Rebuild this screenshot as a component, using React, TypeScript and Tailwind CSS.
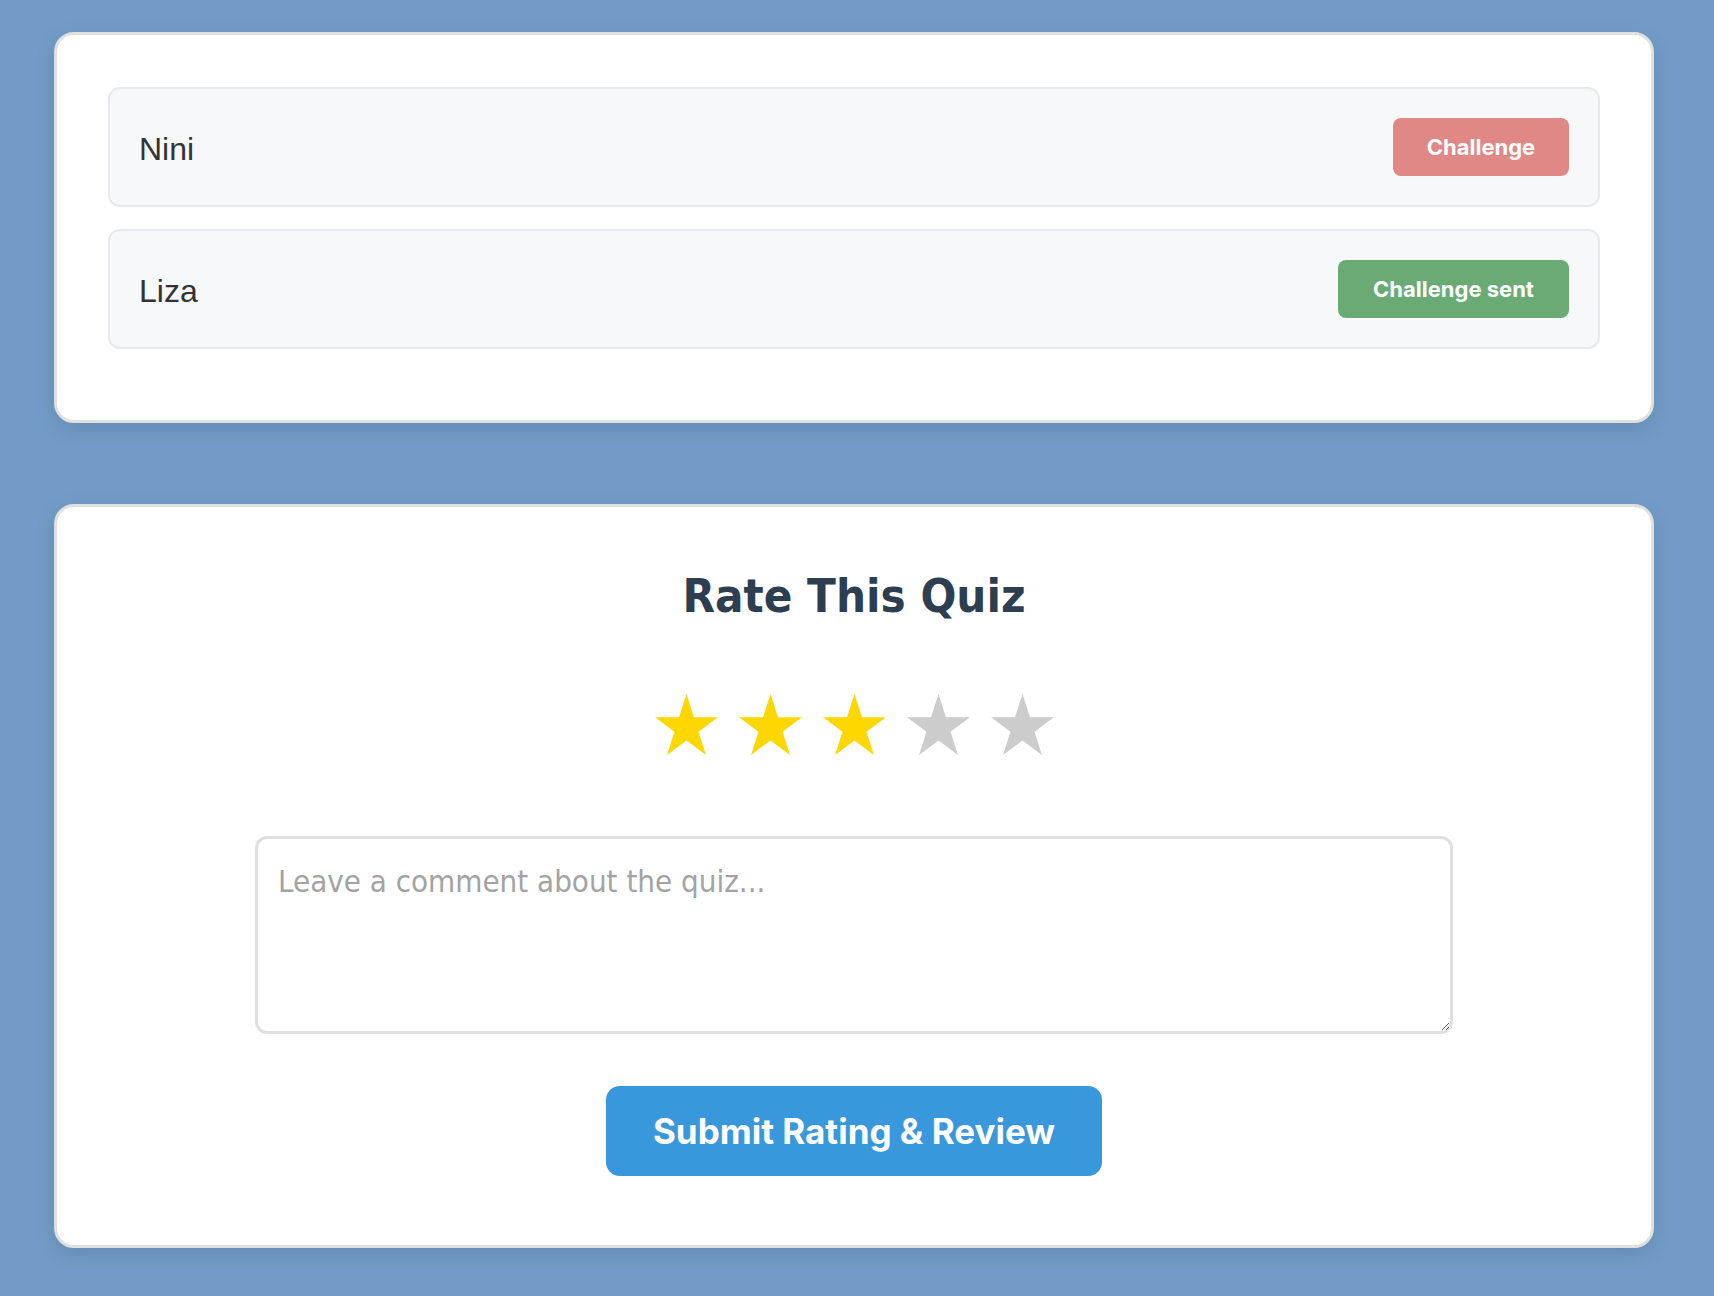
import { useState } from "react";

const players = [
  { name: "Nini", sent: false },
  { name: "Liza", sent: true },
];

function Star({ filled }: { filled: boolean }) {
  return (
    <svg width="63" height="61" viewBox="0 0 63 60" preserveAspectRatio="none">
      <polygon
        points="31.5,0 38.94,22.87 62.98,22.87 43.53,37.01 50.96,59.88 31.5,45.75 12.04,59.88 19.47,37.01 0.02,22.87 24.06,22.87"
        fill={filled ? "#ffd700" : "#cccccc"}
      />
    </svg>
  );
}

function ChallengeList() {
  return (
    <div className="w-[1600px] rounded-[20px] border-[3px] border-[#e0e0e0] bg-white px-[51px] pt-[52px] pb-[71px] shadow-[0_6px_20px_rgba(0,0,0,0.12)]">
      <div className="flex flex-col gap-[22px]">
        {players.map((p) => (
          <div
            key={p.name}
            className="flex h-[120px] items-center justify-between rounded-xl border-2 border-[#e8e9ed] bg-[#f7f8fa] px-[29px]"
          >
            <span className="mt-[3px] font-['Liberation_Sans',Arial,sans-serif] text-[32px] text-[#333]">
              {p.name}
            </span>
            {p.sent ? (
              <button className="flex h-[58px] w-[231px] items-center justify-center rounded-lg bg-[#6aab75] font-['Inter',sans-serif] text-[22px] font-bold text-white">
                Challenge sent
              </button>
            ) : (
              <button className="flex h-[58px] w-[176px] items-center justify-center rounded-lg bg-[#e08886] font-['Inter',sans-serif] text-[22px] font-bold text-white">
                Challenge
              </button>
            )}
          </div>
        ))}
      </div>
    </div>
  );
}

function RatingCard() {
  const [rating, setRating] = useState(3);
  const [comment, setComment] = useState("");

  return (
    <div className="flex w-[1600px] flex-col items-center rounded-[20px] border-[3px] border-[#e0e0e0] bg-white pt-[61px] pb-[69px] shadow-[0_6px_20px_rgba(0,0,0,0.12)]">
      <h2 className="font-['DejaVu_Sans_Condensed','DejaVu_Sans',sans-serif] text-[47px] leading-[56px] font-bold text-[#2c3e50]">
        Rate This Quiz
      </h2>

      <div className="mt-[70px] flex gap-[21px]">
        {[1, 2, 3, 4, 5].map((n) => (
          <button key={n} onClick={() => setRating(n)} className="block">
            <Star filled={n <= rating} />
          </button>
        ))}
      </div>

      <textarea
        value={comment}
        onChange={(e) => setComment(e.target.value)}
        placeholder="Leave a comment about the quiz..."
        className="mt-[81px] block h-[198px] w-[1198px] rounded-xl border-[3px] border-[#e0e0e0] px-[20px] pt-[19px] pb-[20px] font-['DejaVu_Sans_Condensed','DejaVu_Sans',sans-serif] text-[31px] text-[#333] outline-none placeholder:text-[#a3a3a3]"
      />

      <button className="mt-[52px] flex h-[90px] w-[496px] items-center justify-center rounded-[14px] bg-[#3998db] font-['Inter',sans-serif] text-[35px] font-bold text-white">
        Submit Rating &amp; Review
      </button>
    </div>
  );
}

export default function App() {
  return (
    <div className="min-h-screen bg-[#729cc7] pt-[32px] pl-[54px] pb-[48px]">
      <div className="flex flex-col gap-[81px]">
        <ChallengeList />
        <RatingCard />
      </div>
    </div>
  );
}
